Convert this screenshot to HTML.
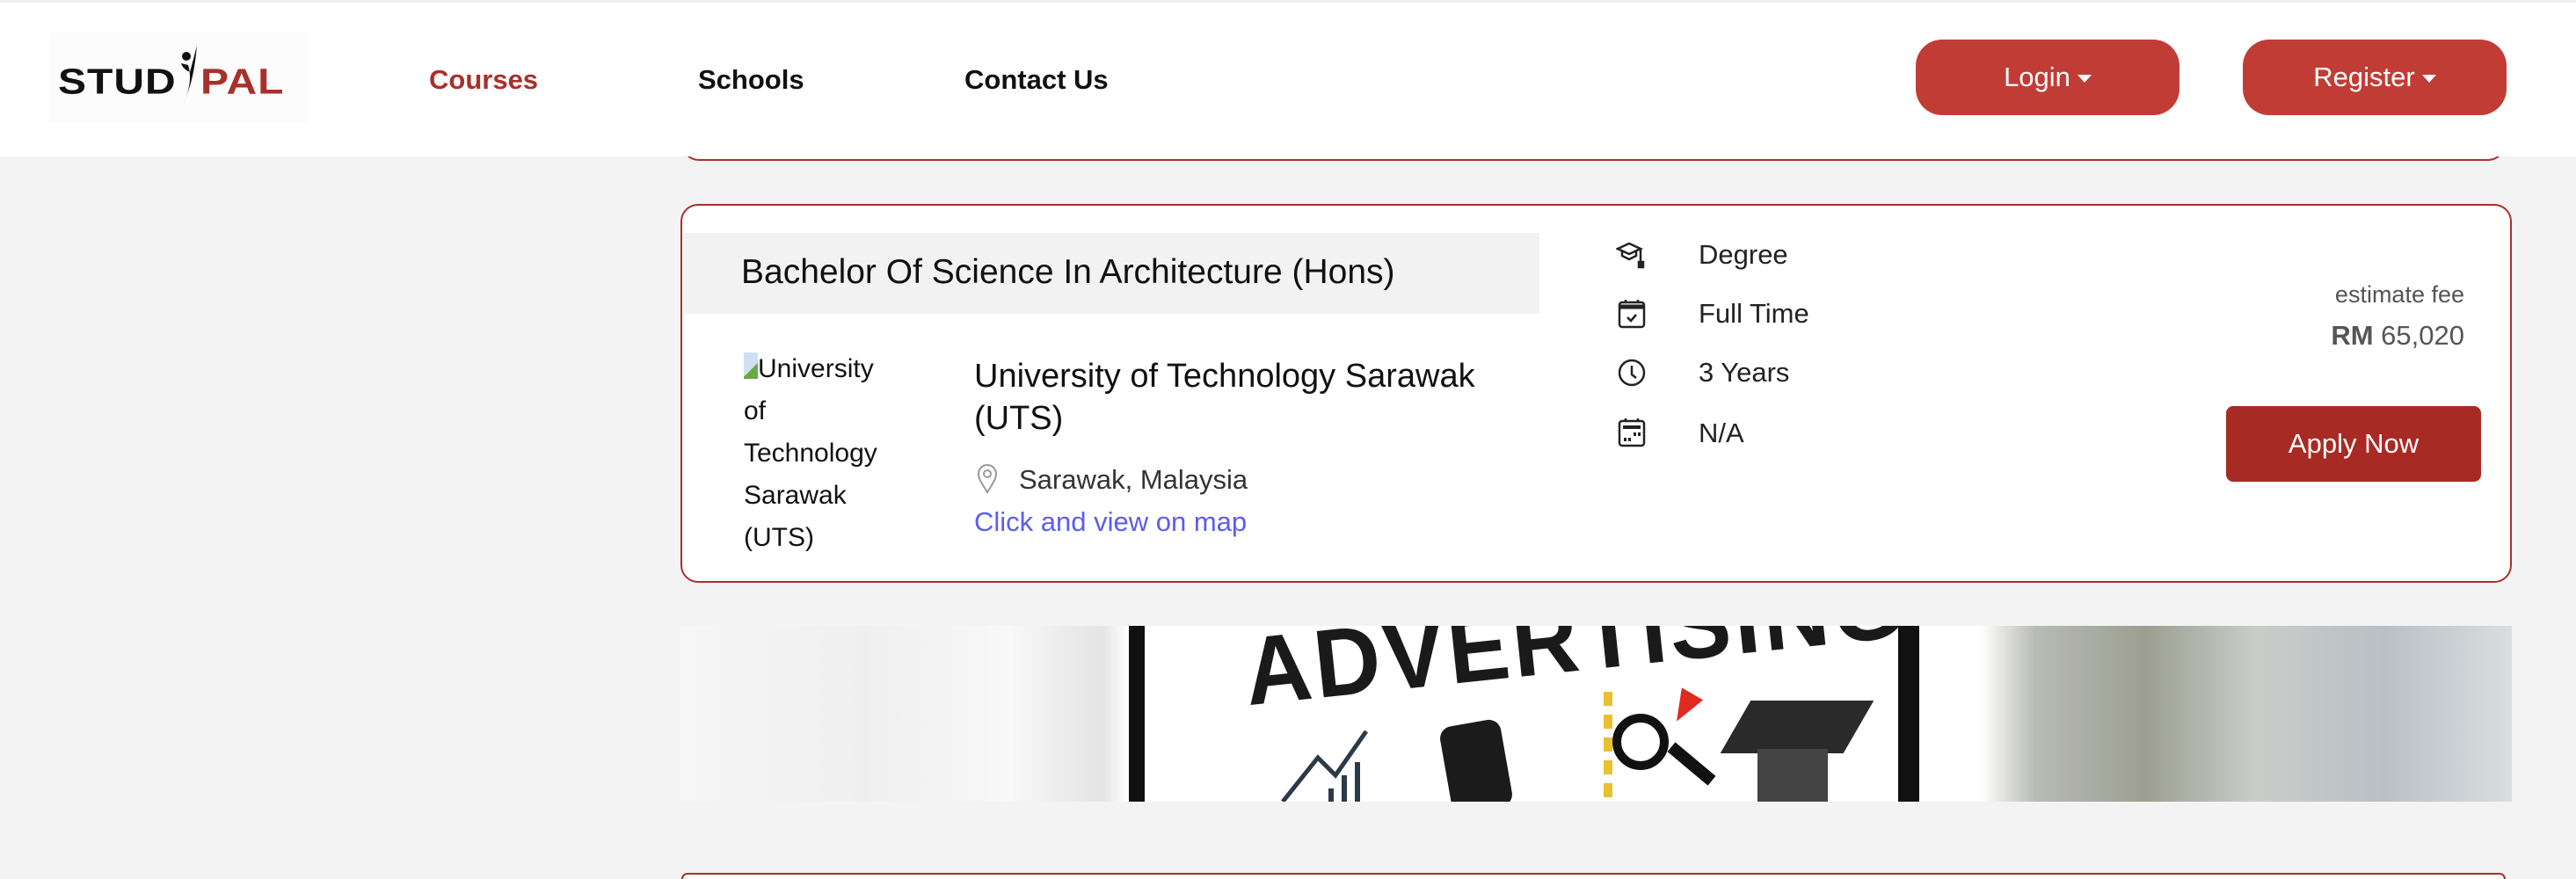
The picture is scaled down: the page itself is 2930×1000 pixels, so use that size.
<!DOCTYPE html>
<html><head><meta charset="utf-8"><style>
*{margin:0;padding:0;box-sizing:border-box}
html{width:2930px;height:1000px;overflow:hidden}
body{width:2930px;height:1000px;background:#f3f3f3;font-family:"Liberation Sans",sans-serif;position:relative;overflow:hidden;color:#111}
.a{position:absolute;white-space:nowrap}
.hdr{position:absolute;left:0;top:0;width:2930px;height:178px;background:#fff;border-top:3px solid #eee}
.nav{font-weight:bold;font-size:31px;top:73px}
.btn{position:absolute;top:45px;width:300px;height:86px;border-radius:30px;background:#c23c36;color:#fff;font-size:31px;text-align:center;line-height:86px}
.btn span{display:inline-block;border-left:8px solid transparent;border-right:8px solid transparent;border-top:9px solid #fff;vertical-align:middle;margin-left:8px}
.card{position:absolute;border:2px solid #a8302b;border-radius:20px;background:#fff}
.it{font-size:31px;color:#222}
</style></head><body>
<div class="a" style="left:775px;top:100px;width:2075px;height:83px;border:2px solid #a8302b;border-top:none;border-radius:0 0 20px 20px;background:#fff"></div>
<div class="hdr"></div>
<div class="a" style="left:56px;top:37px;width:295px;height:103px;background:#fcfcfc"></div>
<div class="a" style="left:66px;top:66px;font-weight:900;font-size:48px;letter-spacing:1px;color:#111;transform:scaleY(0.85)">STUD</div>
<svg class="a" style="left:198px;top:52px" width="32" height="70" viewBox="0 0 32 70"><circle cx="14" cy="12" r="5" fill="#111"/><path d="M26 0 C24 20 22 40 10 68 C18 50 20 35 16 22 L8 20 C10 26 14 28 18 30 Z" fill="#111"/></svg>
<div class="a" style="left:228px;top:66px;font-weight:900;font-size:48px;letter-spacing:1px;color:#a8302b;transform:scaleY(0.85)">PAL</div>
<div class="a nav" style="left:488px;color:#a8302b">Courses</div>
<div class="a nav" style="left:794px">Schools</div>
<div class="a nav" style="left:1097px">Contact Us</div>
<div class="btn" style="left:2179px">Login<span></span></div>
<div class="btn" style="left:2551px">Register<span></span></div>

<div class="card" style="left:774px;top:232px;width:2083px;height:431px"></div>
<div class="a" style="left:777px;top:265px;width:974px;height:92px;background:#f2f2f2"></div>
<div class="a" style="left:843px;top:288px;font-size:39px;font-weight:500">Bachelor Of Science In Architecture (Hons)</div>
<div class="a" style="left:846px;top:396px;font-size:30px;line-height:48px;white-space:normal;width:200px"><span style="display:inline-block;width:16px;height:30px;background:linear-gradient(135deg,#cfe0f5 60%,#6a4 60%);vertical-align:-2px"></span>University<br>of<br>Technology<br>Sarawak<br>(UTS)</div>
<div class="a" style="left:1108px;top:404px;font-size:38px;line-height:48px;font-weight:500">University of Technology Sarawak<br>(UTS)</div>
<svg class="a" style="left:1110px;top:528px" width="26" height="34" viewBox="0 0 26 34"><path d="M13 32 C7 22 3 17 3 11 A10 10 0 0 1 23 11 C23 17 19 22 13 32Z" fill="none" stroke="#999" stroke-width="2"/><circle cx="13" cy="11" r="4" fill="none" stroke="#999" stroke-width="2"/></svg>
<div class="a it" style="left:1159px;top:528px;color:#333">Sarawak, Malaysia</div>
<div class="a" style="left:1108px;top:576px;font-size:31px;color:#5c5cf2">Click and view on map</div>

<svg class="a" style="left:1838px;top:274px" width="34" height="32" viewBox="0 0 34 32" fill="none" stroke="#222" stroke-width="2.5"><path d="M2 9 L15 3 L28 9 L15 15Z"/><path d="M7 12 V17 L15 21 L23 17 V12"/><path d="M28 9 V26"/><rect x="26" y="24" width="5" height="6" fill="#222"/></svg>
<svg class="a" style="left:1840px;top:340px" width="32" height="34" viewBox="0 0 32 34" fill="none" stroke="#222" stroke-width="2.5"><rect x="2" y="4" width="28" height="28" rx="3"/><path d="M2 9 H30" stroke-width="5"/><path d="M9 1V5M23 1V5"/><path d="M11 21 L15 25 L21 18"/></svg>
<svg class="a" style="left:1840px;top:408px" width="32" height="32" viewBox="0 0 32 32" fill="none" stroke="#222" stroke-width="2.5"><circle cx="16" cy="16" r="14"/><path d="M16 8 V18 L21 22"/></svg>
<svg class="a" style="left:1840px;top:475px" width="32" height="34" viewBox="0 0 32 34" fill="none" stroke="#222" stroke-width="2.5"><rect x="2" y="4" width="28" height="28" rx="3"/><path d="M6 11 H26" stroke-width="4"/><path d="M9 1V5M23 1V5"/><path d="M7 25h3M12 25h3M18 19h3M23 19h3" stroke-width="4"/></svg>
<div class="a it" style="left:1932px;top:272px">Degree</div>
<div class="a it" style="left:1932px;top:339px">Full Time</div>
<div class="a it" style="left:1932px;top:406px">3 Years</div>
<div class="a it" style="left:1932px;top:475px">N/A</div>
<div class="a" style="right:127px;top:320px;font-size:27px;color:#555">estimate fee</div>
<div class="a" style="right:127px;top:364px;font-size:31px;color:#555"><b>RM</b> 65,020</div>
<div class="a" style="left:2532px;top:462px;width:290px;height:86px;background:#a82a25;border-radius:8px;color:#fff;font-size:31px;text-align:center;line-height:86px">Apply Now</div>

<div class="a" style="left:774px;top:712px;width:2083px;height:200px;overflow:hidden;background:linear-gradient(90deg,#f6f6f6 0%,#efefef 10%,#f8f8f8 18%,#e4e4e4 23%,#fff 24.5%,#fff 71%,#b8bab5 74%,#9c9f90 80%,#c9ccc9 86%,#b9c0c4 93%,#d9dddf 100%)">
<div class="a" style="left:510px;top:0;width:18px;height:200px;background:#111"></div>
<div class="a" style="left:1385px;top:0;width:24px;height:200px;background:#111"></div>
<div class="a" style="left:620px;top:-50px;font-size:110px;font-weight:900;color:#1a1a1a;transform:rotate(-6deg) scaleX(0.95);letter-spacing:4px">ADVERTISING</div>
<div class="a" style="left:870px;top:110px;width:70px;height:100px;background:#1b1b1b;border-radius:14px;transform:rotate(-10deg)"></div>
<div class="a" style="left:1060px;top:100px;width:64px;height:64px;border:10px solid #111;border-radius:50%"></div>
<div class="a" style="left:1050px;top:75px;width:10px;height:120px;background:repeating-linear-gradient(#e8c030 0 16px,transparent 16px 26px)"></div>
<div class="a" style="left:1120px;top:150px;width:60px;height:14px;background:#111;transform:rotate(40deg)"></div>
<div class="a" style="left:1128px;top:75px;width:0;height:0;border-left:14px solid transparent;border-right:14px solid transparent;border-top:36px solid #e02a20;transform:rotate(30deg)"></div>
<div class="a" style="left:1200px;top:85px;width:140px;height:60px;background:#2a2a2a;transform:skewX(-30deg)"></div>
<div class="a" style="left:1225px;top:140px;width:80px;height:60px;background:#444"></div>
<svg class="a" style="left:680px;top:100px" width="120" height="100"><path d="M5 100 L45 50 L65 70 L100 20" stroke="#2c3a48" stroke-width="5" fill="none"/><path d="M60 100V85M75 100V70M90 100V55" stroke="#2c3a48" stroke-width="6"/></svg>
</div>
<div class="a" style="left:775px;top:993px;width:2075px;height:7px;border:2px solid #a8302b;border-bottom:none;border-radius:12px 12px 0 0;background:#fff"></div>
</body></html>
